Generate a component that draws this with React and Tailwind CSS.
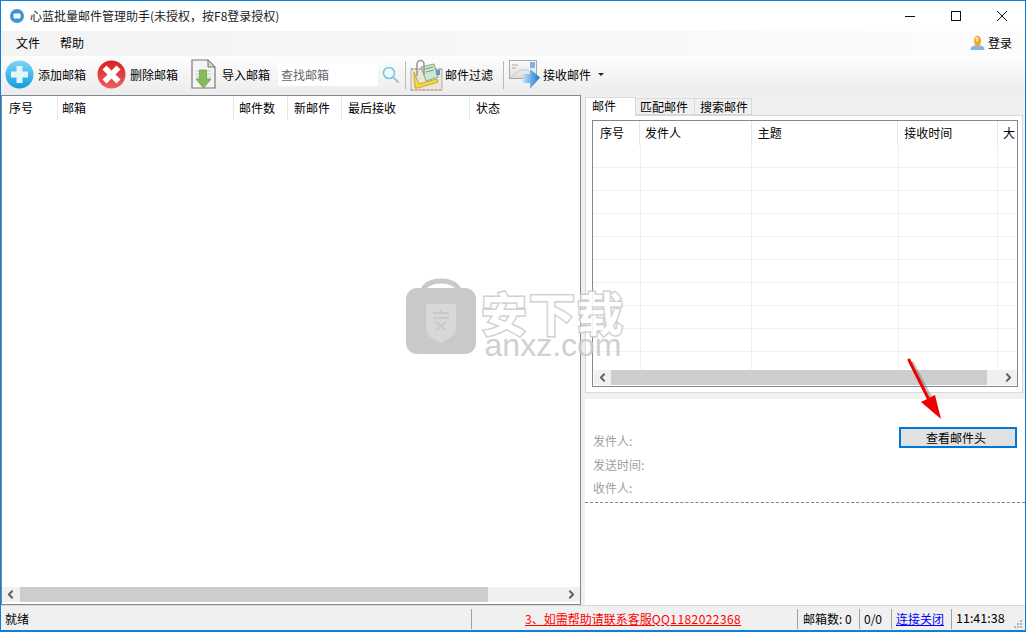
import { ChevronLeft, ChevronRight } from "lucide-react";

const font = { fontFamily: '"Noto Sans CJK SC", "Liberation Sans", sans-serif' };

const PlusIcon = () => (
  <svg width="29" height="29" viewBox="0 0 29 29" className="shrink-0">
    <defs>
      <linearGradient id="plusBg" x1="0" y1="0" x2="0" y2="1">
        <stop offset="0" stopColor="#7fd6f7" />
        <stop offset="1" stopColor="#0f9ede" />
      </linearGradient>
    </defs>
    <circle cx="14.5" cy="14.5" r="14" fill="url(#plusBg)" />
    <path d="M11.5 6h6v5.5H23v6h-5.500V23h-6v-5.500H6v-6h5.500z" fill="#e6f5fc" />
  </svg>
);

const DeleteIcon = () => (
  <svg width="29" height="29" viewBox="0 0 29 29" className="shrink-0">
    <defs>
      <linearGradient id="delBg" x1="0" y1="0" x2="0" y2="1">
        <stop offset="0" stopColor="#d8201f" />
        <stop offset="1" stopColor="#ee5f5f" />
      </linearGradient>
    </defs>
    <circle cx="14.500" cy="14.500" r="14" fill="url(#delBg)" />
    <path d="M9.500 5.500l5 5 5-5 4 4-5 5 5 5-4 4-5-5-5 5-4-4 5-5-5-5z" fill="#fff" />
  </svg>
);

const ImportIcon = () => (
  <svg width="25" height="31" viewBox="0 0 25 31" className="shrink-0">
    <path d="M1 1h16l7 7v21H1z" fill="#f4f4f4" stroke="#777" strokeWidth="1.200" />
    <path d="M17 1v7h7z" fill="#d5d5d5" stroke="#777" />
    <path d="M5 12h15M5 15h15M5 18h15M5 21h15" stroke="#c9c9c9" />
    <path d="M8.500 11h7v9H20l-7.500 9L5 20h3.500z" fill="#86bb5e" stroke="#5f9a43" strokeWidth="0.700" />
  </svg>
);

const SearchIcon = () => (
  <svg width="17" height="17" viewBox="0 0 17 17" className="shrink-0">
    <circle cx="7" cy="7" r="5.500" fill="#f0fafd" stroke="#74c6e6" strokeWidth="1.600" />
    <path d="M11 11l5 5" stroke="#a9c0cc" strokeWidth="2" strokeLinecap="round" />
  </svg>
);

const FilterIcon = () => (
  <svg width="33" height="32" viewBox="0 0 33 32" className="shrink-0">
    <rect x="1" y="10" width="31" height="21" fill="#e9e7dc" stroke="#b3b0a3" />
    <path d="M1 10h31M1 31h31" stroke="#d77f7f" strokeWidth="1.200" strokeDasharray="2 2" />
    <path d="M11 8l13-3 4 13-12 4z" fill="#cfe6cf" stroke="#8aa88a" />
    <path d="M15 10l8-2M16 13l8-2" stroke="#7aa07a" />
    <path d="M4 13l5 12 18-5 1 3-20 6H5z" fill="#f2d84b" stroke="#c9ab2a" />
    <path d="M7 17V5a3.500 3.500 0 0 1 7 0v11" fill="none" stroke="#9a9a9a" strokeWidth="1.600" />
    <rect x="26" y="11" width="4" height="5" fill="#5b9bd5" />
  </svg>
);

const ReceiveIcon = () => (
  <svg width="32" height="30" viewBox="0 0 32 30" className="shrink-0">
    <defs>
      <linearGradient id="envBg" x1="0" y1="0" x2="0" y2="1">
        <stop offset="0" stopColor="#fdfdfd" />
        <stop offset="1" stopColor="#dcdcdc" />
      </linearGradient>
      <linearGradient id="arrBg" x1="0" y1="0" x2="1" y2="0">
        <stop offset="0" stopColor="#bfe0f7" />
        <stop offset="1" stopColor="#1276d6" />
      </linearGradient>
    </defs>
    <rect x="0.500" y="0.500" width="27" height="18" fill="url(#envBg)" stroke="#a8a8a8" />
    <path d="M1 18l10-8h7l9 8" fill="none" stroke="#c8c8c8" />
    <path d="M3 5h6M3 8h4" stroke="#aaa" />
    <rect x="21" y="2" width="5" height="6" fill="#7fb2e0" />
    <path d="M14 14h7V9l10 8.500L21 29v-6h-7z" fill="url(#arrBg)" />
  </svg>
);

const Arrow = () => (
  <svg width="44" height="66" viewBox="0 0 44 66" className="absolute left-[903px] top-[355px]">
    <path d="M7 6l24 46" stroke="#555" strokeOpacity="0.350" strokeWidth="5" />
    <path d="M5 4l22 44" stroke="#f00000" strokeWidth="3" strokeLinecap="round" />
    <path d="M17 46l14-7 6 24z" fill="#f00000" />
  </svg>
);

const ScrollBar = ({ from, to, width }) => (
  <div className="flex items-center bg-[#f0f0f0] h-[15px]" style={{ width }}>
    <div className="w-[17px] flex justify-center shrink-0">
      <ChevronLeft size={13} strokeWidth={3.500} color="#606060" />
    </div>
    <div className="flex-1 h-full">
      <div className="h-full bg-[#cdcdcd]" style={{ marginLeft: from, width: to - from }} />
    </div>
    <div className="w-[17px] flex justify-center shrink-0">
      <ChevronRight size={13} strokeWidth={3.500} color="#606060" />
    </div>
  </div>
);

const leftCols = [
  ["序号", 56, 7],
  ["邮箱", 176, 4],
  ["邮件数", 54, 5],
  ["新邮件", 54, 6],
  ["最后接收", 128, 6],
  ["状态", 110, 6],
];

const rightCols = [
  ["序号", 47, 7],
  ["发件人", 112, 5],
  ["主题", 147, 6],
  ["接收时间", 100, 6],
  ["大", 19, 5],
];

const rows = [0, 1, 2, 3, 4, 5, 6, 7, 8, 9];

const Tool = ({ icon, label, className, gap }) => (
  <div className={"flex items-center " + (className || "")}>
    {icon}
    <span className="whitespace-nowrap" style={{ marginLeft: gap }}>{label}</span>
  </div>
);

const Sep = ({ className }) => <div className={"w-px h-[28px] bg-[#b9b9b9] " + className} />;

const StatusSep = ({ className }) => <div className={"w-px h-5 bg-[#a0a0a0] shrink-0 " + className} />;

export default function App() {
  return (
    <div
      style={font}
      className="relative w-[1026px] h-[632px] flex flex-col overflow-hidden border-x border-t border-b-2 border-[#0f7fd8] bg-[#f0f0f0] text-xs text-black"
    >
      {/* title bar */}
      <div className="h-[30px] shrink-0 bg-white flex items-center">
        <svg width="14" height="14" viewBox="0 0 14 14" className="ml-[9px] mr-[6px]">
          <circle cx="7" cy="7" r="7" fill="#3a95dd" />
          <rect x="3.500" y="4.500" width="7" height="5" rx="1" fill="#fff" />
        </svg>
        <span className="text-[#222]">{"心蓝批量邮件管理助手(未授权\uFF0C按F8登录授权)"}</span>
        <div className="ml-auto flex items-center">
          <svg width="12" height="12" viewBox="0 0 12 12" className="mr-[34px]">
            <path d="M1 6.500h10" stroke="#111" />
          </svg>
          <svg width="12" height="12" viewBox="0 0 12 12" className="mr-[34px]">
            <rect x="1.500" y="1.500" width="9" height="9" fill="none" stroke="#111" />
          </svg>
          <svg width="12" height="12" viewBox="0 0 12 12" className="mr-[17px]">
            <path d="M1 1l10 10M11 1L1 11" stroke="#111" />
          </svg>
        </div>
      </div>

      {/* menu */}
      <div className="h-[25px] shrink-0 flex items-center pb-[2px] bg-linear-to-r from-[#f3f3f3] to-[#fcfcfc]">
        <span className="ml-[15px]">文件</span>
        <span className="ml-[20px]">帮助</span>
        <div className="ml-auto mr-[13px] flex items-center">
          <svg width="15" height="15" viewBox="0 0 15 15" className="mr-[3px]">
            <path d="M0.500 15c0-3 2-4 4-4.500h6c2 .5 4 1.500 4 4.500z" fill="#7fb6ea" />
            <ellipse cx="7.500" cy="6" rx="3.500" ry="5.500" fill="#f4a62c" />
            <ellipse cx="7" cy="4" rx="1.500" ry="2.500" fill="#fbe2a6" />
          </svg>
          <span>登录</span>
        </div>
      </div>

      {/* toolbar */}
      <div className="h-[39px] shrink-0 flex items-center pb-[2px] bg-linear-to-b from-[#fdfdfd] to-[#ececec]">
        <Tool className="ml-[4px]" gap={4} icon={<PlusIcon />} label="添加邮箱" />
        <Tool className="ml-[11px]" gap={4} icon={<DeleteIcon />} label="删除邮箱" />
        <Tool className="ml-[13px]" gap={6} icon={<ImportIcon />} label="导入邮箱" />
        <div className="ml-[8px] w-[100px] h-[23px] bg-white flex items-center pl-[3px] text-[#666]">查找邮箱</div>
        <div className="ml-[4px]">
          <SearchIcon />
        </div>
        <Sep className="ml-[6px]" />
        <Tool className="ml-[4px]" gap={2} icon={<FilterIcon />} label="邮件过滤" />
        <Sep className="ml-[10px]" />
        <Tool className="ml-[5px]" gap={2} icon={<ReceiveIcon />} label="接收邮件" />
        <div className="ml-[7px] w-0 h-0 border-x-[3px] border-t-[3px] border-x-transparent border-t-[#222]" />
      </div>

      {/* main */}
      <div className="flex-1 min-h-0 flex">
        <div className="w-[580px] shrink-0 flex flex-col bg-white border border-[#828790]">
          <div className="h-6 shrink-0 flex">
            {leftCols.map(([name, w, pad]) => (
              <div key={name} className="flex items-center border-r border-[#e5e5e5] last:border-r-0" style={{ width: w, paddingLeft: pad }}>
                {name}
              </div>
            ))}
          </div>
          <div className="flex-1" />
          <div className="flex justify-end pb-[2px]">
            <ScrollBar from={1} to={469} width={578} />
          </div>
        </div>

        <div className="flex-1 flex flex-col pl-[4px]">
          {/* tabs */}
          <div className="h-[20px] pt-[2px] shrink-0 flex items-end">
            <div className="w-[51px] h-[19px] bg-white border border-b-0 border-[#d9d9d9] flex items-center pl-[6px] pb-[2px] relative z-10 -mb-px">邮件</div>
            <div className="w-[59px] h-[17px] bg-[#f0f0f0] border border-l-0 border-[#d9d9d9] flex items-center pl-[4px]">匹配邮件</div>
            <div className="w-[57px] h-[17px] bg-[#f0f0f0] border border-l-0 border-[#d9d9d9] flex items-center pl-[5px]">搜索邮件</div>
          </div>
          <div className="h-[278px] w-[438px] shrink-0 bg-white border border-[#d9d9d9] pt-[4px] pl-[6px]">
            <div className="w-[426px] h-[267px] border border-[#828790] flex flex-col">
              <div className="h-6 shrink-0 flex">
                {rightCols.map(([name, w, pad]) => (
                  <div key={name} className="flex items-center border-r border-[#e5e5e5] last:border-r-0" style={{ width: w, paddingLeft: pad }}>
                    {name}
                  </div>
                ))}
              </div>
              <div className="flex-1 min-h-0 overflow-hidden">
                {rows.map((r) => (
                  <div key={r} className="h-[23px] flex pl-px border-b border-[#f0f0f0]">
                    {rightCols.map(([name, w]) => (
                      <div key={name} className="border-r border-[#f0f0f0] last:border-r-0" style={{ width: w }} />
                    ))}
                  </div>
                ))}
              </div>
              <div className="pl-px pb-px">
                <ScrollBar from={0} to={376} width={423} />
              </div>
            </div>
          </div>

          {/* detail pane */}
          <div className="mt-[6px] flex-1 bg-white flex flex-col">
            <div className="flex h-[104px] shrink-0 border-b border-dashed border-[#808080]">
              <div className="pl-[8px] pt-[34px] flex flex-col text-[#a0a0a0]">
                <span className="leading-[16px]">发件人:</span>
                <span className="leading-[16px] mt-[8px]">发送时间:</span>
                <span className="leading-[16px] mt-[7px]">收件人:</span>
              </div>
              <button className="ml-auto mr-[8px] mt-[28px] w-[118px] h-[21px] pr-[4px] bg-[#e1e1e1] border-2 border-[#0078d7] flex items-center justify-center">
                查看邮件头
              </button>
            </div>
          </div>
        </div>
      </div>

      {/* status bar */}
      <div className="h-[25px] shrink-0 flex items-center pt-px border-t border-[#d9d9d9] bg-[#f0f0f0]">
        <span className="ml-[4px] w-[466px]">就绪</span>
        <StatusSep />
        <span className="ml-[53px] w-[272px] text-[#ff0000] underline whitespace-nowrap">
          3、如需帮助请联系客服<span className="tracking-[0.42px]">QQ1182022368</span>
        </span>
        <StatusSep />
        <span className="ml-[5px] w-[56px] whitespace-nowrap">邮箱数: 0</span>
        <StatusSep />
        <span className="ml-[4px] w-[27px]">0/0</span>
        <StatusSep />
        <span className="ml-[4px] w-[55px] text-[#0000ff] underline whitespace-nowrap">连接关闭</span>
        <StatusSep />
        <span className="ml-[4px] text-[12.5px]">11:41:38</span>
      </div>

      {/* watermark */}
      <div className="absolute left-[404px] top-[273px] flex opacity-90 pointer-events-none">
        <svg width="72" height="82" viewBox="0 0 72 82">
          <path d="M18 16C22 4 50 4 54 16" fill="none" stroke="#c4c4c4" strokeWidth="5" />
          <rect x="1" y="14" width="70" height="66" rx="11" fill="#c4c4c4" />
          <path d="M21 30h30v24c0 8-9 12-15 15-6-3-15-7-15-15z" fill="#d4d4d4" />
          <path d="M28 44h16M36 36v3M28 39h16M31 48l10 8M41 48l-10 8" stroke="#c4c4c4" strokeWidth="2" fill="none" />
        </svg>
        <div className="ml-[4px] flex flex-col items-center">
          <span className="text-[46px] leading-[44px] font-bold text-white [-webkit-text-stroke:3px_#cdcdcd] [paint-order:stroke_fill] tracking-[2px] mt-[15px]">安下载</span>
          <span className="text-[32px] leading-[24px] text-[#cbcbcb] font-['Liberation_Sans',sans-serif]">anxz.com</span>
        </div>
      </div>

      <Arrow />

      {/* resize grip */}
      <svg width="10" height="10" viewBox="0 0 10 10" className="absolute right-[2px] bottom-[1px]">
        <path d="M7 1h2v2H7zM4 4h2v2H4zM7 4h2v2H7zM1 7h2v2H1zM4 7h2v2H4zM7 7h2v2H7z" fill="#b5b5b5" />
      </svg>
    </div>
  );
}
